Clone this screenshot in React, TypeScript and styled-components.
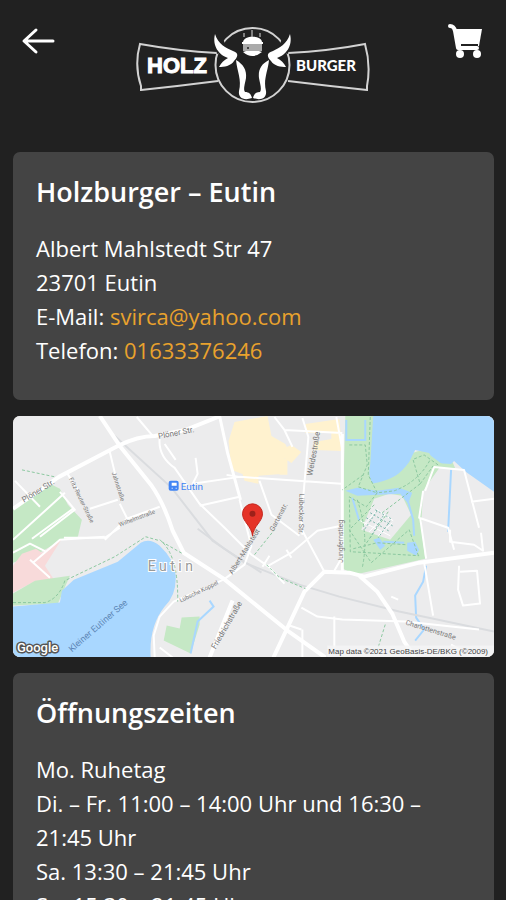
import React from "react";
import styled, { createGlobalStyle } from "styled-components";

const GlobalStyle = createGlobalStyle`
  *, *::before, *::after { box-sizing: border-box; }
  html { scrollbar-width: none; }
  body {
    margin: 0;
    background: #212121;
    color: #fff;
    font-family: "Open Sans", "Noto Sans", sans-serif;
  }
`;

const Header = styled.header`
  display: flex;
  align-items: flex-start;
  justify-content: space-between;
  padding: 24px 20px 48px;
`;

const BackButton = styled.button`
  display: flex;
  width: 40px;
  padding: 2px 0;
  border: 0;
  background: none;
  color: #fff;
  cursor: pointer;
`;

const CartLink = styled.a`
  display: flex;
  justify-content: flex-end;
  width: 40px;
  color: #fff;
`;

const LogoLink = styled.a`
  display: flex;
  color: #fff;
`;

const Main = styled.main`
  display: flex;
  flex-direction: column;
  gap: 16px;
  padding: 0 12px 16px 13px;
`;

const Card = styled.section`
  padding: 23px 23px 33px;
  border-radius: 7px;
  background: #444;
`;

const Title = styled.h2`
  margin: 0 0 22px;
  font-size: 27px;
  font-weight: 600;
  line-height: 34px;
`;

const Text = styled.p`
  margin: 0;
  font-size: 22px;
  line-height: 34px;
`;

const TextLink = styled.a`
  color: #e9a22d;
  text-decoration: none;
`;

const MapFrame = styled.section`
  display: flex;
  overflow: hidden;
  border-radius: 7px;
  background: #ececed;
`;

const MapDrawing = styled.svg`
  display: block;
  width: 100%;
  height: auto;
  font-family: Roboto, sans-serif;
`;

const Logo = () => (
  <svg width="236" height="80" viewBox="136 24 236 80" fill="none" role="img" aria-label="Holz Burger">
    <g stroke="#d2d2d2" strokeWidth="2">
      <path d="M218 53Q180 51 141 44Q135 65 142 86V90Q180 86 219 81" />
      <path d="M289 53Q330 51 366 44Q372 65 368 86V90Q330 86 289 81" />
      <circle cx="253.500" cy="65" r="37" />
    </g>
    <path fill="#212121" d="M215 39l9-1 4 12-10 4zM292 39l-9-1-4 12 10 4z" />
    <g fill="#fff">
      <path d="M216 34C219 44 227 48 234 51C241 53 238 58 235 61C232 66 225 67 220 67C222 63 225 60 229 58C220 55 213 46 216 34Z" />
      <path d="M291 34C288 44 280 48 274 51C266 53 269 58 272 61C275 66 282 67 287 67C285 63 282 60 278 58C287 55 294 46 291 34Z" />
      <path d="M237 60C244 64 248 70 247 78C246 84 244 89 246 92C250 92 252 94 253 98C245 101 239 98 240 91C243 80 238 71 237 60Z" />
      <path d="M270 60C262 64 259 70 260 78C261 84 263 89 261 92C257 92 255 94 254 98C262 101 268 98 267 91C264 80 269 71 270 60Z" />
      <path d="M244 42C245 35 262 35 263 42Z" />
      <path fill="#aaa" d="M244 43h19v8h-19z" />
      <path d="M243 42h21v2h-21zM244 52Q253 60 263 52L260 51H247Z" />
    </g>
    <path stroke="#ddd" d="M245 33v4M253 30v7M261 33v4" />
    <circle cx="249" cy="48" r="1" fill="#212121" />
    <text x="148" y="73" fill="#fff" stroke="#fff" strokeWidth="1" fontFamily="'Liberation Sans', Arial, sans-serif" fontSize="22" fontWeight="700">HOLZ</text>
    <text x="297" y="71" fill="#fff" fontFamily="Lato, sans-serif" fontSize="15" fontWeight="900">BURGER</text>
  </svg>
);

type Label = { text: string; x: number; y: number; angle: number; size: number; color?: string };

const labels: Label[] = [
  { text: "Plöner Str.", x: 24, y: 503, angle: -32, size: 8 },
  { text: "Plöner Str.", x: 159, y: 439, angle: -11, size: 8 },
  { text: "Fritz-Reuter-Straße", x: 69, y: 479, angle: 64, size: 6 },
  { text: "Jahnstraße", x: 112, y: 473, angle: 72, size: 6 },
  { text: "Wilhelmstraße", x: 120, y: 527, angle: -21, size: 6 },
  { text: "Weidestraße", x: 313, y: 476, angle: -80, size: 8 },
  { text: "Lübecker Str.", x: 300, y: 494, angle: 91, size: 7 },
  { text: "Gartenstr.", x: 274, y: 532, angle: -62, size: 7 },
  { text: "Albert-Mahlstedt", x: 233, y: 575, angle: -58, size: 7 },
  { text: "Lübsche Koppel", x: 181, y: 603, angle: -26, size: 6 },
  { text: "Friedrichstraße", x: 216, y: 650, angle: -60, size: 8 },
  { text: "Jungfernstieg", x: 344, y: 563, angle: -90, size: 7 },
  { text: "Charlottenstraße", x: 406, y: 625, angle: 17, size: 7 },
  { text: "Kleiner Eutiner See", x: 72, y: 653, angle: -41, size: 9, color: "#5d86b6" },
];

const MapView = () => (
  <MapDrawing viewBox="13 416 482 242" role="img" aria-label="Karte von Eutin">
    <path fill="#ececed" d="M13 416h482v242H13z" />

    <g fill="#fff2cf">
      <path d="M235 422L268 416L272 436L286 444L291 455L283 460L282 474L259 476V484L245 481L243 474L232 470L229 441Z" />
      <path d="M276 452L292 445L302 452L292 463ZM280 459h8v16h-8zM306 424L340 419L343 451L315 450V442L332 439V433H306Z" />
    </g>

    <path fill="#c5e8c5" d="M13 508L52 485L60 489L68 505L82 520L78 537L62 540L38 554L13 563Z" />
    <path fill="#f8dada" d="M13 566L22 554L36 549L42 553L62 539L45 566L58 586L36 581L13 593Z" />
    <path fill="#c5e8c5" d="M13 594L35 581L70 576L58 604L13 606Z" />
    <path fill="#c5e8c5" d="M182 618L200 617V625L191 654L164 641L167 626L180 629Z" />

    <path fill="#a9d7ff" d="M13 607L60 603L62 591L74 580L118 562L141 543Q150 538 160 546Q175 560 176 576Q177 595 165 607Q149 627 151 658H13Z" />
    <path fill="#c5e8c5" d="M346 416H376V500L412 453L428 450L439 462L453 461L456 468L436 468L424 491L422 526L426 559L355 575L342 568Z" />
    <path fill="#a9d7ff" d="M374 416H495V492L467 472L455 461L452 464L436 463L430 453L416 450L410 462Q397 480 376 486Q368 480 371 464Z" />
    <path fill="#c5e8c5" d="M372 484Q400 479 412 462Q413 451 420 451L432 456L443 464L424 491L376 500Z" />
    <path fill="#ececed" d="M375 499L390 494L403 496L412 515L391 540L362 530Z" />
    <g fill="#a9d7ff">
      <path d="M346 491L358 488L378 491L400 488L413 493L409 504L401 494L358 496Z" />
      <path d="M374 540L380 538L386 546L381 550ZM408 543L416 542L420 550L417 556L408 551Z" />
    </g>
    <g fill="none" stroke="#a9d7ff" strokeWidth="2">
      <path d="M347 420V440H366V420" />
      <path d="M452 470L449 532M409 502L414 520L415 536M427 566L424 582L416 596L417 618L425 630L416 641M210 601L214 607L198 622L191 654M353 498L360 521M384 542L405 543" />
    </g>

    <g fill="none" stroke="#dadcdf" strokeWidth="2">
      <path d="M115 436L172 488L213 541L245 563L300 585L340 597L400 612L495 632" />
      <path d="M198 529L225 549L262 573" />
    </g>

    <g fill="none" stroke="#fff" strokeWidth="2" strokeLinejoin="round">
      <path d="M13 540L65 493M32 539L73 509M15 481L40 507M60 492L75 510L40 537M67 473L78 490M110 452L116 477M120 504L127 518M90 509L118 500M105 540L127 519L160 507M64 538H105L120 528M137 417L153 436" />
      <path d="M160 438Q158 456 175 468L200 504L225 528L252 555L269 567L285 584M196 458L198 474L193 484L240 477L342 484M200 506L240 497M165 444L176 460M227 475L240 477M270 556L263 567M269 566L292 553L318 531L342 526M260 481L272 515L300 536M287 550L292 558M275 417L285 430L343 433M285 430L293 447M303 418L309 437L302 519L303 535M337 417L343 450" />
      <path d="M240 500L252 547M252 546L245 565L224 580M224 580L174 602L160 617L154 636L155 658M160 648L173 658M303 531L325 572M302 608L318 617L343 620L406 622L480 630M335 571L343 557M290 626L302 630M335 617V648M303 630V658M425 563L434 616M460 566L459 590L464 606L481 604L478 571L461 572M451 530V542L475 545L484 551L482 533M392 597L399 600M424 491L420 518L449 528L455 550M426 491L435 467L465 470L480 528M472 502L495 499M421 518L427 559M452 645L475 658" />
      <path d="M33 563L60 540L105 537M30 560L50 578M13 553L30 544L46 552" />
      <path d="M365 525L378 510L394 521M370 532L386 515M379 536L393 523M361 521L391 536" strokeWidth="1" />
    </g>
    <g fill="none" stroke="#fff" strokeWidth="4" strokeLinejoin="round">
      <path d="M100 416L120 446L152 486Q164 503 173 531L184 553L224 579L288 631L326 658M13 509L59 477L118 446Q138 436 155 436L186 430L221 416" />
      <path d="M274 658L305 592L325 572L350 573L365 577L420 563L495 553M360 576L378 592L393 614L405 642L416 658M233 601L210 658" />
    </g>
    <path fill="none" stroke="#fff" strokeWidth="3" d="M220 416L228 453L241 500M343 434V571" />
    <g fill="none" stroke="#8cc8a0" strokeWidth="1" strokeDasharray="3 2">
      <path d="M13 603L45 603Q59 599 65 581L115 557L146 537L160 541M160 540Q179 555 178 602M162 542L183 554M22 470L55 477M255 555L275 530M267 565L280 578L306 589" />
      <path d="M371 417L369 475L378 493L395 491Q419 482 431 460M350 445H366L368 465L359 487L378 493L367 507L350 497L351 552L420 556M364 475L343 490M414 460L421 484L434 466M415 459L425 455L439 465M421 484L383 513M358 500Q370 535 363 568M375 505L350 530L372 563L410 530L420 558M354 549L378 543L407 545M389 512L366 545M386 625L378 651" />
    </g>
    <g fill="none" stroke="#7db7ac" strokeDasharray="2 2">
      <path d="M367 518L391 532M371 513L395 527M376 510L392 519M384 516L371 538M378 511L365 530M391 521L379 538" />
    </g>

    {labels.map((label) => (
      <text
        key={`${label.text}-${label.x}`}
        x={label.x}
        y={label.y}
        fontSize={label.size}
        fill={label.color ?? "#777"}
        transform={`rotate(${label.angle} ${label.x} ${label.y})`}
      >
        {label.text}
      </text>
    ))}

    <rect x="169" y="481" width="10" height="10" rx="2" fill="#4285f4" />
    <path fill="#fff" d="M172 483h5v3h-5zM172 488h1v1h-1zM176 488h1v1h-1z" />
    <text x="181" y="490" fontSize="10" fill="#4285f4">Eutin</text>
    <text x="148" y="571" fontSize="14" fill="#999" stroke="#fff" strokeWidth="2" paintOrder="stroke">E u t i n</text>

    <path fill="#e53328" stroke="#c4271f" d="M253 536C252 526 243 522 243 514A10 10 0 0 1 263 514C263 522 254 526 253 536Z" />
    <circle cx="253" cy="514" r="3" fill="#9d211a" />

    <path fill="#f5f5f5" fillOpacity="0.800" d="M328 646h167v12H328z" />
    <text x="329" y="655" fontSize="8" fill="#444" fontFamily="'Liberation Sans', Arial, sans-serif">Map data ©2021 GeoBasis-DE/BKG (©2009)</text>
    <text x="17" y="653" fontSize="13" fill="#fff" stroke="#555" strokeWidth="3" strokeLinejoin="round" paintOrder="stroke" fontWeight="500">Google</text>
  </MapDrawing>
);

export default function App() {
  return (
    <>
      <GlobalStyle />
      <Header>
        <BackButton type="button" aria-label="Zurück">
          <svg width="38" height="30" viewBox="20 26 38 30" fill="none" stroke="currentColor" strokeWidth="3" strokeLinecap="round" strokeLinejoin="round">
            <path d="M53 41H25M36 30L24 41L36 52" />
          </svg>
        </BackButton>
        <LogoLink href="#">
          <Logo />
        </LogoLink>
        <CartLink href="#warenkorb" aria-label="Warenkorb">
          <svg width="40" height="38" viewBox="446 24 40 38" fill="currentColor">
            <path fill="none" stroke="currentColor" strokeWidth="4" strokeLinecap="round" strokeLinejoin="round" d="M450 26Q454 26 455 31L458 48H477" />
            <path d="M454 29H482L479 46H457Z" />
            <circle cx="460" cy="54" r="4" />
            <circle cx="477" cy="54" r="4" />
            <path fill="#212121" d="M461 44h17v2h-17z" />
          </svg>
        </CartLink>
      </Header>
      <Main>
        <Card>
          <Title>Holzburger – Eutin</Title>
          <Text>
            Albert Mahlstedt Str 47
            <br />
            23701 Eutin
            <br />
            E-Mail: <TextLink href="mailto:svirca@yahoo.com">svirca@yahoo.com</TextLink>
            <br />
            Telefon: <TextLink href="tel:01633376246">01633376246</TextLink>
          </Text>
        </Card>
        <MapFrame>
          <MapView />
        </MapFrame>
        <Card>
          <Title>Öffnungszeiten</Title>
          <Text>
            Mo. Ruhetag
            <br />
            Di. – Fr. 11:00 – 14:00 Uhr und 16:30 – 21:45 Uhr
            <br />
            Sa. 13:30 – 21:45 Uhr
            <br />
            So. 15:30 – 21:45 Uhr
          </Text>
        </Card>
      </Main>
    </>
  );
}
